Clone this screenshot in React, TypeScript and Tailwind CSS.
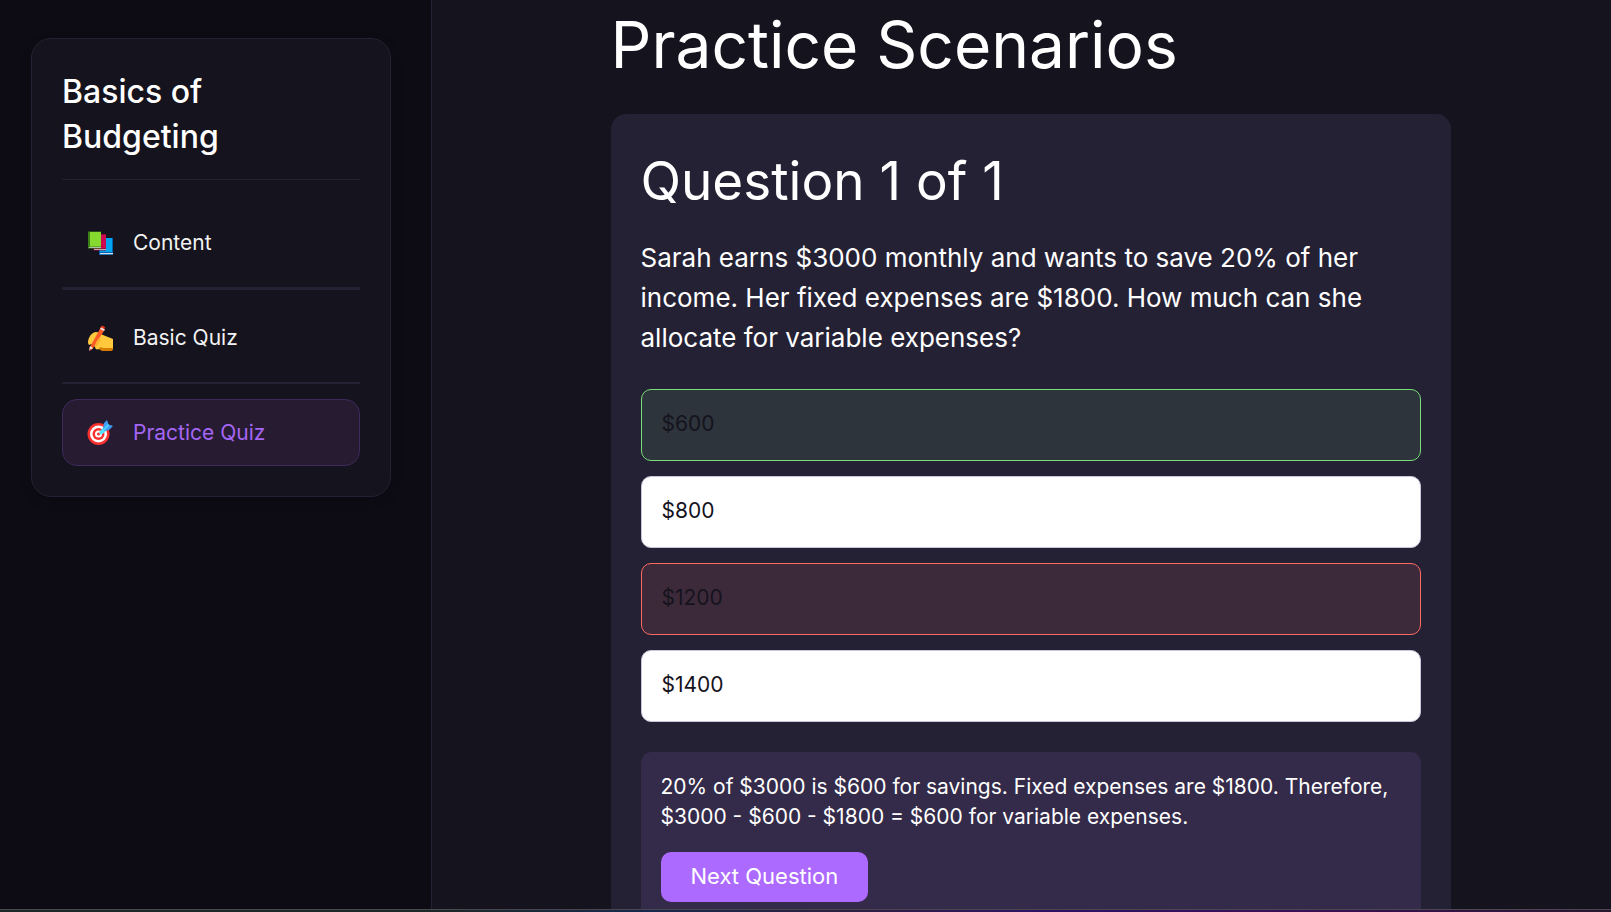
import { useState, type ReactNode } from "react";

function BooksIcon() {
  return (
    <svg viewBox="0 0 26 26" className="size-[26px] shrink-0" aria-hidden="true">
      <path d="M12 8h14v17H12z" fill="#0063b1" />
      <path d="M14 8h11v14H13v-9z" fill="#00a4ef" />
      <path d="M13 23h13v1.200H13z" fill="#d6dde3" />
      <path d="M6.500 4.500h12.500v16H6.500z" fill="#8f0d3a" />
      <path d="M9 4.500h10v13.500H8z" fill="#cc0a4f" />
      <path d="M7 19h12v1H7z" fill="#c9a9b5" />
      <path d="M1 1.500h13v17H1z" fill="#3c8018" />
      <path d="M3 2h11v14.500H3z" fill="#86d92f" />
      <path d="M2 17h12v1H2z" fill="#a9c4a6" />
    </svg>
  );
}

function WritingIcon() {
  return (
    <svg viewBox="0 0 26 26" className="size-[26px] shrink-0" aria-hidden="true">
      <path d="M1 18C1 12 5 7 9 7c3 0 4 2 7 3l10 4v9c0 2-1 2-2 2H14l-2-1c-2 1-4 0-4-2l-3-3-3 1z" fill="#ffc83d" />
      <path d="M13 22l3 1h10v1c0 1-1 2-2 2h-9l-3-2z" fill="#d67d00" />
      <path d="M13.500 3l4 2-12 19-3 1 .5-3z" fill="#ff5a26" />
      <path d="M15 0.500l3 1.500-1 3-4-2z" fill="#f03a17" />
      <path d="M14 2.500l4 2-1 1.500-4-2z" fill="#f0e0dc" />
      <path d="M3 21l3 2-3 2.500H2z" fill="#fbe3cf" />
      <path d="M3 24l1.500.5L2.500 26z" fill="#b8122d" />
      <path d="M9 17l3-4 2 1-3 6-3 2z" fill="#ffb02e" />
    </svg>
  );
}

function TargetIcon() {
  return (
    <svg viewBox="0 0 26 26" className="size-[26px] shrink-0" aria-hidden="true">
      <circle cx="11.500" cy="14" r="11" fill="#f8312f" />
      <circle cx="11.500" cy="14" r="8.500" fill="#fff" />
      <circle cx="11.500" cy="14" r="6" fill="#f8312f" />
      <circle cx="11.500" cy="14" r="3.500" fill="#fff" />
      <circle cx="11.500" cy="14" r="1.500" fill="#f8312f" />
      <path d="M12.500 11.500L17 7l3 3-4.500 4a2 2 0 0 1-3-2.500z" fill="#50e2ff" />
      <path d="M16 8l1-5 3-3 1.500 4.500L26 6l-4 4-5 1z" fill="#3f9df5" />
      <path d="M16 11l5.500-6.500" stroke="#50e2ff" strokeWidth="1.200" />
    </svg>
  );
}

function NavItem({ icon, label, active = false }: { icon: ReactNode; label: string; active?: boolean }) {
  return (
    <a
      href="#"
      aria-current={active ? "page" : undefined}
      className={
        active
          ? "flex h-[67px] items-center gap-5 rounded-[15px] border border-[#3e2a5c] bg-[#261b31] px-6 text-[21px] text-[#a566f5]"
          : "flex h-[67px] items-center gap-5 rounded-[15px] border border-transparent px-6 text-[21px] text-[#f2f2f2]"
      }
    >
      {icon}
      <span>{label}</span>
    </a>
  );
}

const options = ["$600", "$800", "$1200", "$1400"];
const correct = "$600";

function optionStyle(option: string, picked: string) {
  if (option === correct) return "border-[#77dd77] bg-[#2d343c]";
  if (option === picked) return "border-[#ff6b61] bg-[#3c2a3a]";
  return "border-[#cac5dc] bg-white";
}

export default function App() {
  const [picked, setPicked] = useState("$1200");
  return (
    <div className="flex h-screen flex-col overflow-hidden bg-[#15131d] font-['Inter',sans-serif] text-white">
      <div className="flex min-h-0 flex-1">
        <aside className="w-[432px] shrink-0 border-r border-[#252134] bg-[#0d0b14] pt-[38px] pr-10 pl-[31px]">
          <div className="rounded-[20px] border border-[#252134] bg-[#15131d] p-[30px] shadow-[0_4px_12px_rgba(0,0,0,0.15)]">
            <h2 className="border-b border-[#252134] pb-5 text-[32px] leading-[45px] font-medium">
              Basics of
              <br />
              Budgeting
            </h2>
            <nav className="pt-[29px]" aria-label="Lesson sections">
              <NavItem icon={<BooksIcon />} label="Content" />
              <hr className="mt-[11px] mb-[14px] border-t-3 border-[#252134]" />
              <NavItem icon={<WritingIcon />} label="Basic Quiz" />
              <hr className="mt-[11px] mb-[15px] border-t-2 border-[#252134]" />
              <NavItem icon={<TargetIcon />} label="Practice Quiz" active />
            </nav>
          </div>
        </aside>
        <main className="min-w-0 flex-1 overflow-hidden pl-[18px]">
          <div className="mx-auto max-w-[840px]">
            <h1 className="pb-6 text-[64px] leading-[90px]">Practice Scenarios</h1>
            <section className="rounded-[15px] bg-[#252134] p-[30px]">
              <h2 className="text-[53px] leading-[74px]">Question 1 of 1</h2>
              <p className="mt-5 text-[26px] leading-10">
                Sarah earns $3000 monthly and wants to save 20% of her income. Her fixed expenses are $1800. How much
                can she allocate for variable expenses?
              </p>
              <div className="mt-[31px] flex flex-col gap-[15px]">
                {options.map((option) => (
                  <button
                    key={option}
                    type="button"
                    onClick={() => setPicked(option)}
                    className={`h-[72px] rounded-[10px] border px-5 pb-0.5 text-left text-[21px] text-[#15131d] ${optionStyle(option, picked)}`}
                  >
                    {option}
                  </button>
                ))}
              </div>
              <div className="mt-[30px] rounded-[10px] bg-[#342a49] p-5">
                <p className="text-[21px] leading-[30px]">
                  20% of $3000 is $600 for savings. Fixed expenses are $1800. Therefore, $3000 - $600 - $1800 = $600 for
                  variable expenses.
                </p>
                <button type="button" className="mt-5 h-[50px] rounded-[10px] bg-[#ad6aff] px-[30px] pb-0.5 text-[22px]">
                  Next Question
                </button>
              </div>
            </section>
          </div>
        </main>
      </div>
      <div className="h-[3px] shrink-0 border-t border-[#4a4750] bg-[linear-gradient(to_right,#1b2a28_0%,#1b2a28_27%,#172a4e_40%,#2c2140_52%,#2e1266_65%,#3a0f58_80%,#2a1830_100%)]" />
    </div>
  );
}
